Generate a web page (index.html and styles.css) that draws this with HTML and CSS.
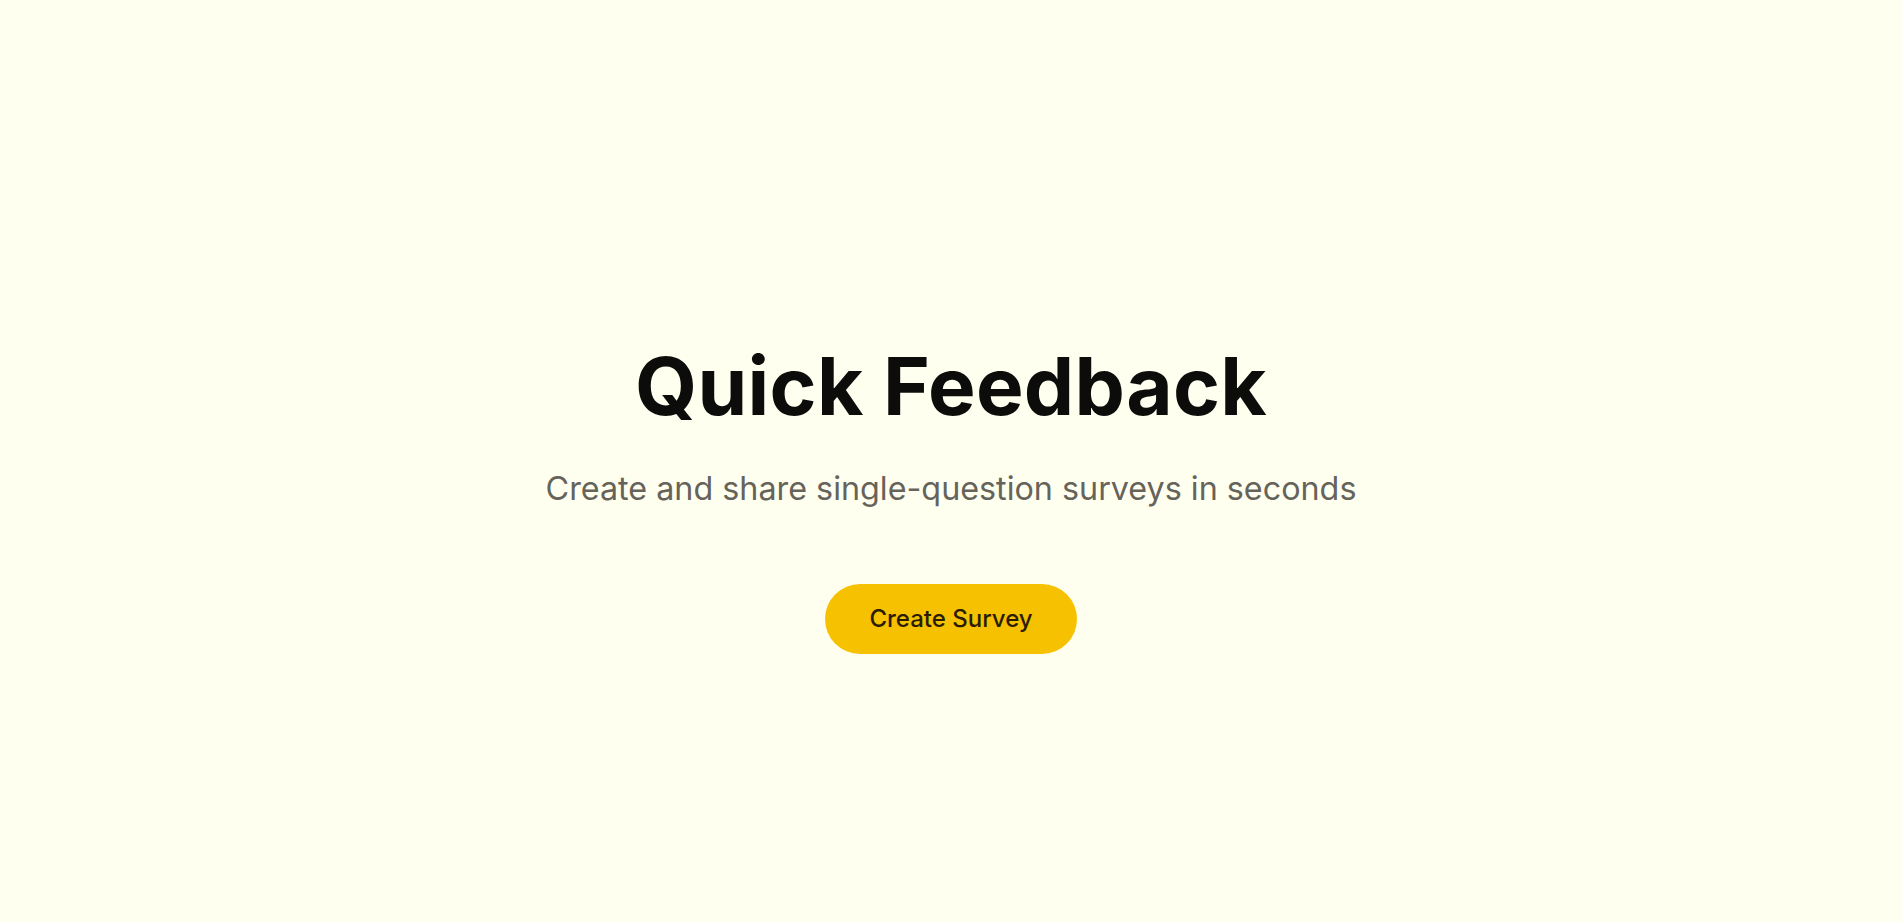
FILE: index.html
```html
<!DOCTYPE html>
<html lang="en">
<head>
<meta charset="utf-8">
<title>Quick Feedback</title>
<link rel="stylesheet" href="styles.css">
</head>
<body>
<main class="hero">
  <h1 class="title">Quick Feedback</h1>
  <p class="subtitle">Create and share single-question surveys in seconds</p>
  <button class="cta" type="button">Create Survey</button>
</main>
</body>
</html>
```

FILE: styles.css
```css
html, body {
  margin: 0;
  padding: 0;
  height: 100%;
}
body {
  background: #fffff0;
  font-family: Inter, "Noto Sans", sans-serif;
}
.hero {
  box-sizing: border-box;
  min-height: 100vh;
  padding-top: 74px;
  display: flex;
  flex-direction: column;
  align-items: center;
  justify-content: center;
  text-align: center;
}
.title {
  margin: 0;
  font-size: 80px;
  line-height: 1.1;
  font-weight: 700;
  letter-spacing: 0.004em;
  color: #0c0c0a;
}
.subtitle {
  margin: 36px 0 0;
  font-size: 32.3px;
  line-height: 1.4;
  font-weight: 400;
  color: #66635a;
}
.cta {
  margin-top: 72px;
  height: 70px;
  padding: 0 44px;
  border: none;
  border-radius: 35px;
  background: #f6c100;
  color: #2b1d00;
  font-family: Inter, "Noto Sans", sans-serif;
  font-size: 24px;
  font-weight: 500;
  cursor: pointer;
}
```
